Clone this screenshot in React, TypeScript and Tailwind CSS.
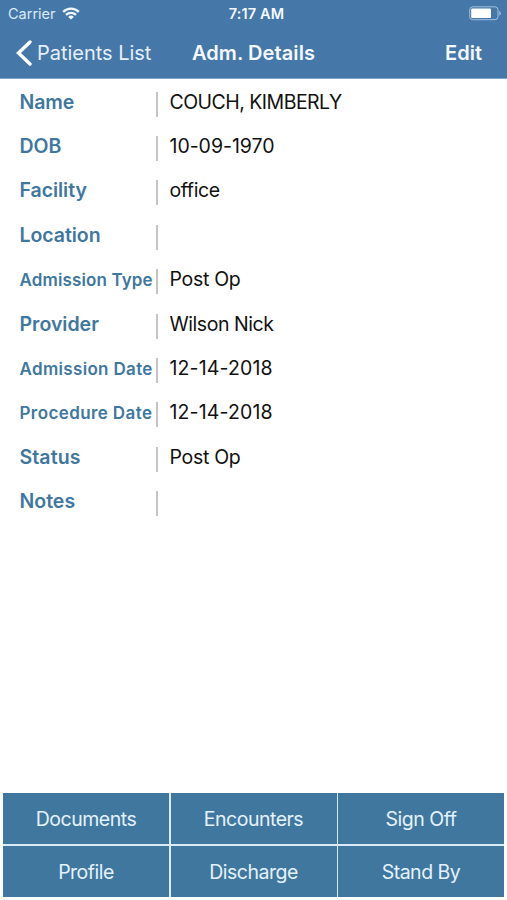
import React from 'react';

interface Field {
  label: string;
  value: string;
  labelClass: string;
  valueClass: string;
}

const fields: Field[] = [
  { label: 'Name', value: 'COUCH, KIMBERLY', labelClass: 'mt-[2px] text-[19.5px] tracking-[-0.1px]', valueClass: 'tracking-[-0.53px]' },
  { label: 'DOB', value: '10-09-1970', labelClass: 'mt-[2px] text-[19.5px]', valueClass: 'tracking-[-0.03px]' },
  { label: 'Facility', value: 'office', labelClass: 'mt-[2px] text-[19.5px] tracking-[-0.05px]', valueClass: 'tracking-[-0.4px]' },
  { label: 'Location', value: '', labelClass: 'mt-[2px] text-[19.5px] tracking-[-0.05px]', valueClass: '' },
  { label: 'Admission Type', value: 'Post Op', labelClass: 'mt-[4px] text-[17px] tracking-[0.13px]', valueClass: 'tracking-[-0.3px]' },
  { label: 'Provider', value: 'Wilson Nick', labelClass: 'mt-[2px] text-[19.5px]', valueClass: 'tracking-[-0.45px]' },
  { label: 'Admission Date', value: '12-14-2018', labelClass: 'mt-[4px] text-[17px] tracking-[0.33px]', valueClass: 'tracking-[0.15px]' },
  { label: 'Procedure Date', value: '12-14-2018', labelClass: 'mt-[4px] text-[17px] tracking-[0.4px]', valueClass: 'tracking-[0.15px]' },
  { label: 'Status', value: 'Post Op', labelClass: 'mt-[2px] text-[19.5px] tracking-[0.1px]', valueClass: 'tracking-[-0.3px]' },
  { label: 'Notes', value: '', labelClass: 'mt-[2px] text-[19.5px]', valueClass: '' },
];

const actions = ['Documents', 'Encounters', 'Sign Off', 'Profile', 'Discharge', 'Stand By'];

const WifiIcon: React.FC = () => (
  <svg className="w-[18px] h-[13px]" viewBox="0 0 18 13" fill="none" stroke="#f4f9ff" strokeWidth="2.3">
    <path d="M1.2 4.9a11 11 0 0 1 15.6 0" />
    <path d="M4 7.9a7 7 0 0 1 10 0" />
    <path d="M9 12.6 6.2 9.9a4 4 0 0 1 5.6 0Z" fill="#f4f9ff" stroke="none" />
  </svg>
);

const BatteryIcon: React.FC = () => (
  <svg className="w-8 h-[15px]" viewBox="0 0 32 15" fill="none">
    <rect x="0.7" y="0.8" width="28.3" height="12.9" rx="3" stroke="#a3c1df" strokeWidth="1" />
    <rect x="2.2" y="2.5" width="19.8" height="9.4" rx="1" fill="#fff" />
    <path d="M30.3 5v4.6c1-.4 1.5-1.2 1.5-2.3s-.5-1.9-1.5-2.3Z" fill="#a3c1df" />
  </svg>
);

const FieldRow: React.FC<{ field: Field }> = ({ field }) => (
  <div className="flex h-[44.4px] items-center pl-[19.5px]">
    <div className={`w-[136.5px] shrink-0 whitespace-nowrap font-semibold text-[#40779f] ${field.labelClass}`}>{field.label}</div>
    <div className="mt-[6px] h-[25px] w-[1.5px] shrink-0 bg-[#c4c4c4]" />
    <div className={`ml-[12px] mt-[2px] whitespace-nowrap text-[19.5px] text-[#111] ${field.valueClass}`}>{field.value}</div>
  </div>
);

const App: React.FC = () => (
  <div className="flex h-[900px] w-[507px] flex-col overflow-hidden bg-white font-['Inter',sans-serif]">
    <header className="h-[79px] shrink-0 border-b border-[#7ba3cc] bg-[#4577a8] text-[#f4f9ff]">
      <div className="grid h-[27px] grid-cols-[1fr_auto_1fr] items-center pl-2 pr-[6px]">
        <div className="flex items-center gap-[6px]">
          <span className="text-[14.5px] text-[#dceaf8]">Carrier</span>
          <WifiIcon />
        </div>
        <span className="pl-[4px] text-[14.5px] font-semibold tracking-[0.15px]">7:17 AM</span>
        <div className="flex justify-end">
          <BatteryIcon />
        </div>
      </div>
      <div className="grid h-[51px] grid-cols-[1fr_auto_1fr] items-center pl-4 pr-[25px]">
        <button className="flex items-center gap-[5px] whitespace-nowrap">
          <svg className="h-[26px] w-4" viewBox="0 0 16 26" fill="none" stroke="#fff" strokeWidth="3.4" strokeLinecap="round">
            <path d="M14 2 2.5 13 14 24" />
          </svg>
          <span className="text-[20px] text-[#e4f0fc] tracking-[-0.03px]">Patients List</span>
        </button>
        <h1 className="pl-[9px] text-[20px] font-semibold tracking-[0.08px]">Adm. Details</h1>
        <button className="text-right text-[20px] font-semibold">Edit</button>
      </div>
    </header>
    <main className="flex-1">
      {fields.map((field) => (
        <FieldRow key={field.label} field={field} />
      ))}
    </main>
    <footer className="mx-[3px] mb-[3px] grid h-[104px] shrink-0 grid-cols-3 grid-rows-2 gap-[1.5px] bg-[#d9ecf8]">
      {actions.map((action) => (
        <button key={action} className="bg-[#40779f] pt-[2px] text-[19.5px] tracking-[-0.5px] text-[#e4f2fd]">
          {action}
        </button>
      ))}
    </footer>
  </div>
);

export default App;
